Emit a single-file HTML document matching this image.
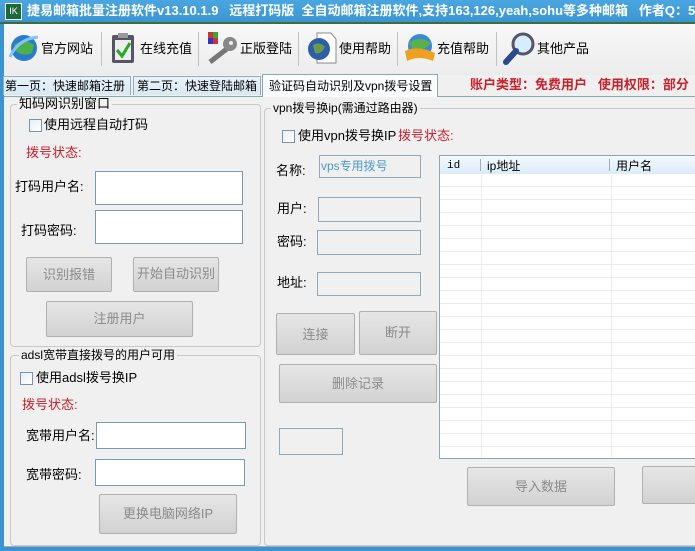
<!DOCTYPE html>
<html><head><meta charset="utf-8"><style>
*{margin:0;padding:0;box-sizing:border-box}
html,body{width:695px;height:551px;overflow:hidden}
body{background:#f0f0f0;font-family:"Liberation Sans","Noto Sans CJK SC","WenQuanYi Zen Hei",sans-serif;font-size:12px;color:#000;position:relative}
#w{position:absolute;left:0;top:0;width:695px;height:551px;overflow:hidden}
.a{position:absolute;white-space:nowrap}
.t{position:absolute;white-space:nowrap;line-height:14px}
.in{position:absolute;background:#fff;border:1px solid #7a9ab4}
.ind{position:absolute;background:#f0f0f0;border:1px solid #90a8bc}
.btn{position:absolute;border:1px solid #b0b0b0;border-radius:2px;background:linear-gradient(#e6e6e6,#d2d2d2);color:#8a8a8a;text-align:center;font-size:13px}
.grp{position:absolute;border:1px solid #c8c8c8;border-radius:4px}
.gt{position:absolute;background:#f0f0f0;padding:0 2px;line-height:14px;font-size:12px}
.cb{position:absolute;width:13px;height:13px;border:1px solid #7b93ad;background:linear-gradient(135deg,#e8eef4,#fff)}
.red{color:#c8202a}
.tb{position:absolute;top:41px;font-size:13px;line-height:16px}
.sep{position:absolute;top:32px;width:1px;height:34px;background:#c0c0c0}
</style></head><body><div id="w">
<div class="a" style="left:0;top:0;width:695px;height:23px;background:linear-gradient(#4aa6e0,#3b94d2)"></div>
<div class="a" style="left:5px;top:3px;width:17px;height:17px;background:#1a6a3a;border:1px solid #fff;color:#fff;font-size:9px;text-align:center;line-height:15px">IK</div>
<div class="a" style="left:27px;top:3px;width:668px;overflow:hidden;color:#fff;font-weight:bold;font-size:13px;line-height:16px">捷易邮箱批量注册软件v13.10.1.9 &nbsp; 远程打码版 &nbsp;全自动邮箱注册软件,支持163,126,yeah,sohu等多种邮箱 &nbsp; 作者Q：593811</div>
<div class="a" style="left:0;top:22px;width:695px;height:2px;background:#3d6e3a"></div>
<div class="a" style="left:0;top:24px;width:4px;height:527px;background:#3b94d2"></div>
<div class="a" style="left:4px;top:24px;width:691px;height:51px;background:linear-gradient(#f8f8f8,#ececec)"></div>
<svg class="a" style="left:8px;top:31px" width="32" height="34"><circle cx="16" cy="17" r="13" fill="#2a7ad0"/><path d="M6 14 Q16 6 26 14 L24 22 Q14 26 8 20Z" fill="#4cb04a"/><path d="M2 26 Q10 8 30 6" stroke="#7fc6ff" stroke-width="3" fill="none"/></svg>
<div class="tb" style="left:41px">官方网站</div>
<div class="sep" style="left:101px"></div>
<svg class="a" style="left:110px;top:31px" width="26" height="34"><rect x="2" y="4" width="22" height="28" fill="#556" rx="2"/><rect x="5" y="9" width="16" height="20" fill="#eee"/><rect x="8" y="2" width="10" height="5" fill="#999"/><path d="M7 19 L12 25 L20 12" stroke="#2a2" stroke-width="3" fill="none"/></svg>
<div class="tb" style="left:140px">在线充值</div>
<div class="sep" style="left:198px"></div>
<svg class="a" style="left:206px;top:30px" width="34" height="36"><rect x="2" y="2" width="10" height="12" fill="#c33"/><rect x="7" y="2" width="5" height="6" fill="#3a3"/><rect x="2" y="8" width="5" height="6" fill="#33c"/><path d="M4 32 L22 18" stroke="#777" stroke-width="5"/><circle cx="24" cy="14" r="7" fill="#888"/><circle cx="25" cy="13" r="2" fill="#eee"/></svg>
<div class="tb" style="left:240px">正版登陆</div>
<div class="sep" style="left:298px"></div>
<svg class="a" style="left:305px;top:31px" width="32" height="34"><path d="M12 2 H26 L31 8 V32 H12Z" fill="#fff" stroke="#888"/><circle cx="14" cy="18" r="11" fill="#2d5ea8"/><path d="M8 14 Q14 10 20 16 Q16 24 10 22Z" fill="#6a9a4a"/></svg>
<div class="tb" style="left:339px">使用帮助</div>
<div class="sep" style="left:397px"></div>
<svg class="a" style="left:403px;top:31px" width="34" height="34"><circle cx="17" cy="15" r="12" fill="#3a8ad8"/><path d="M6 12 Q16 4 28 12 Q22 20 10 18Z" fill="#5ab04a"/><path d="M2 20 Q14 14 32 22 L30 30 Q16 24 4 30Z" fill="#f0a020"/></svg>
<div class="tb" style="left:437px">充值帮助</div>
<div class="sep" style="left:496px"></div>
<svg class="a" style="left:503px;top:31px" width="34" height="34"><circle cx="20" cy="13" r="10" fill="#d8ecff" stroke="#556" stroke-width="3"/><path d="M13 20 L3 31" stroke="#2a4a8a" stroke-width="6" stroke-linecap="round"/></svg>
<div class="tb" style="left:537px">其他产品</div>
<div class="a" style="left:4px;top:75px;width:691px;height:21px;background:#f0f0f0"></div>
<div class="a" style="left:3px;top:76px;width:128px;height:19px;border:1px solid #9ab;border-bottom:none;background:linear-gradient(#eaf3fb,#d8e8f4);font-size:12px;line-height:18px;padding-left:1px">第一页：快速邮箱注册</div>
<div class="a" style="left:133px;top:76px;width:128px;height:19px;border:1px solid #9ab;border-bottom:none;background:linear-gradient(#eaf3fb,#d8e8f4);font-size:12px;line-height:18px;padding-left:3px">第二页：快速登陆邮箱</div>
<div class="a" style="left:262px;top:74px;width:176px;height:23px;border:1px solid #8aa;border-bottom:none;background:#fafcfe;font-size:12px;line-height:22px;padding-left:6px">验证码自动识别及vpn拨号设置</div>
<div class="a" style="left:4px;top:96px;width:258px;height:1px;background:#8aa"></div>
<div class="a" style="left:438px;top:96px;width:257px;height:1px;background:#8aa"></div>
<div class="a red" style="left:470px;top:77px;font-weight:bold;font-size:13px;line-height:16px">账户类型：免费用户 &nbsp; 使用权限：部分</div>
<div class="grp" style="left:10px;top:104px;width:251px;height:243px"></div>
<div class="gt" style="left:17px;top:97px;font-size:13px">知码网识别窗口</div>
<div class="cb" style="left:29px;top:119px"></div>
<div class="t" style="left:44px;top:118px;font-size:13px">使用远程自动打码</div>
<div class="t red" style="left:26px;top:146px;font-size:13px">拨号状态:</div>
<div class="t" style="left:15px;top:180px;font-size:13px">打码用户名:</div>
<div class="in" style="left:95px;top:171px;width:148px;height:34px"></div>
<div class="t" style="left:21px;top:224px;font-size:13px">打码密码:</div>
<div class="in" style="left:95px;top:210px;width:148px;height:34px"></div>
<div class="btn" style="left:26px;top:257px;width:86px;height:35px;line-height:33px">识别报错</div>
<div class="btn" style="left:133px;top:257px;width:86px;height:35px;line-height:31px">开始自动识别</div>
<div class="btn" style="left:46px;top:301px;width:147px;height:36px;line-height:34px">注册用户</div>
<div class="grp" style="left:10px;top:355px;width:251px;height:191px"></div>
<div class="gt" style="left:19px;top:348px">adsl宽带直接拨号的用户可用</div>
<div class="cb" style="left:20px;top:372px"></div>
<div class="t" style="left:36px;top:371px;font-size:13px">使用adsl拨号换IP</div>
<div class="t red" style="left:22px;top:398px;font-size:13px">拨号状态:</div>
<div class="t" style="left:26px;top:429px;font-size:13px">宽带用户名:</div>
<div class="in" style="left:96px;top:422px;width:150px;height:27px"></div>
<div class="t" style="left:26px;top:468px;font-size:13px">宽带密码:</div>
<div class="in" style="left:95px;top:459px;width:150px;height:27px"></div>
<div class="btn" style="left:99px;top:494px;width:138px;height:40px;line-height:38px">更换电脑网络IP</div>
<div class="grp" style="left:264px;top:108px;width:440px;height:438px"></div>
<div class="gt" style="left:271px;top:101px">vpn拨号换ip(需通过路由器)</div>
<div class="cb" style="left:282px;top:130px"></div>
<div class="t" style="left:298px;top:129px;font-size:13px">使用vpn拨号换IP</div>
<div class="t red" style="left:398px;top:129px;font-size:13px">拨号状态:</div>
<div class="t" style="left:276px;top:164px;font-size:13px">名称:</div>
<div class="ind" style="left:319px;top:155px;width:102px;height:23px;color:#4a9ac8;font-size:12px;line-height:21px;padding-left:1px">vps专用拨号</div>
<div class="t" style="left:277px;top:202px;font-size:13px">用户:</div>
<div class="ind" style="left:318px;top:197px;width:103px;height:25px"></div>
<div class="t" style="left:277px;top:235px;font-size:13px">密码:</div>
<div class="ind" style="left:317px;top:230px;width:104px;height:25px"></div>
<div class="t" style="left:277px;top:276px;font-size:13px">地址:</div>
<div class="ind" style="left:317px;top:272px;width:104px;height:24px"></div>
<div class="btn" style="left:276px;top:313px;width:79px;height:42px;line-height:42px">连接</div>
<div class="btn" style="left:359px;top:311px;width:78px;height:44px;line-height:42px">断开</div>
<div class="btn" style="left:279px;top:364px;width:158px;height:39px;line-height:37px">删除记录</div>
<div class="ind" style="left:279px;top:428px;width:64px;height:27px"></div>
<div class="a" style="left:439px;top:155px;width:260px;height:304px;border:1px solid #8aa4b8;background:#fff;background-image:repeating-linear-gradient(#fff 0,#fff 12px,#ececec 12px,#ececec 13px);background-position:0 18px;"></div>
<div class="a" style="left:440px;top:156px;width:256px;height:18px;background:linear-gradient(#f4faff,#dcebf8)"></div>
<div class="a" style="left:440px;top:174px;width:256px;height:1px;background:#fff"></div>
<div class="a" style="left:481px;top:175px;width:1px;height:283px;background:#ececec"></div>
<div class="a" style="left:611px;top:175px;width:1px;height:283px;background:#ececec"></div>
<div class="a" style="left:480px;top:159px;width:1px;height:12px;background:#aab"></div>
<div class="a" style="left:609px;top:159px;width:1px;height:12px;background:#aab"></div>
<div class="t" style="left:447px;top:159px;font-size:11px;font-family:'Liberation Mono',monospace">id</div>
<div class="t" style="left:487px;top:159px;font-size:12px">ip地址</div>
<div class="t" style="left:616px;top:159px;font-size:12px">用户名</div>
<div class="btn" style="left:467px;top:467px;width:148px;height:39px;line-height:37px">导入数据</div>
<div class="btn" style="left:642px;top:466px;width:80px;height:38px;line-height:36px"></div>
<div class="a" style="left:4px;top:546px;width:691px;height:1px;background:#aab"></div>
<div class="a" style="left:0;top:547px;width:695px;height:4px;background:#3b94d2"></div>
</div></body></html>
